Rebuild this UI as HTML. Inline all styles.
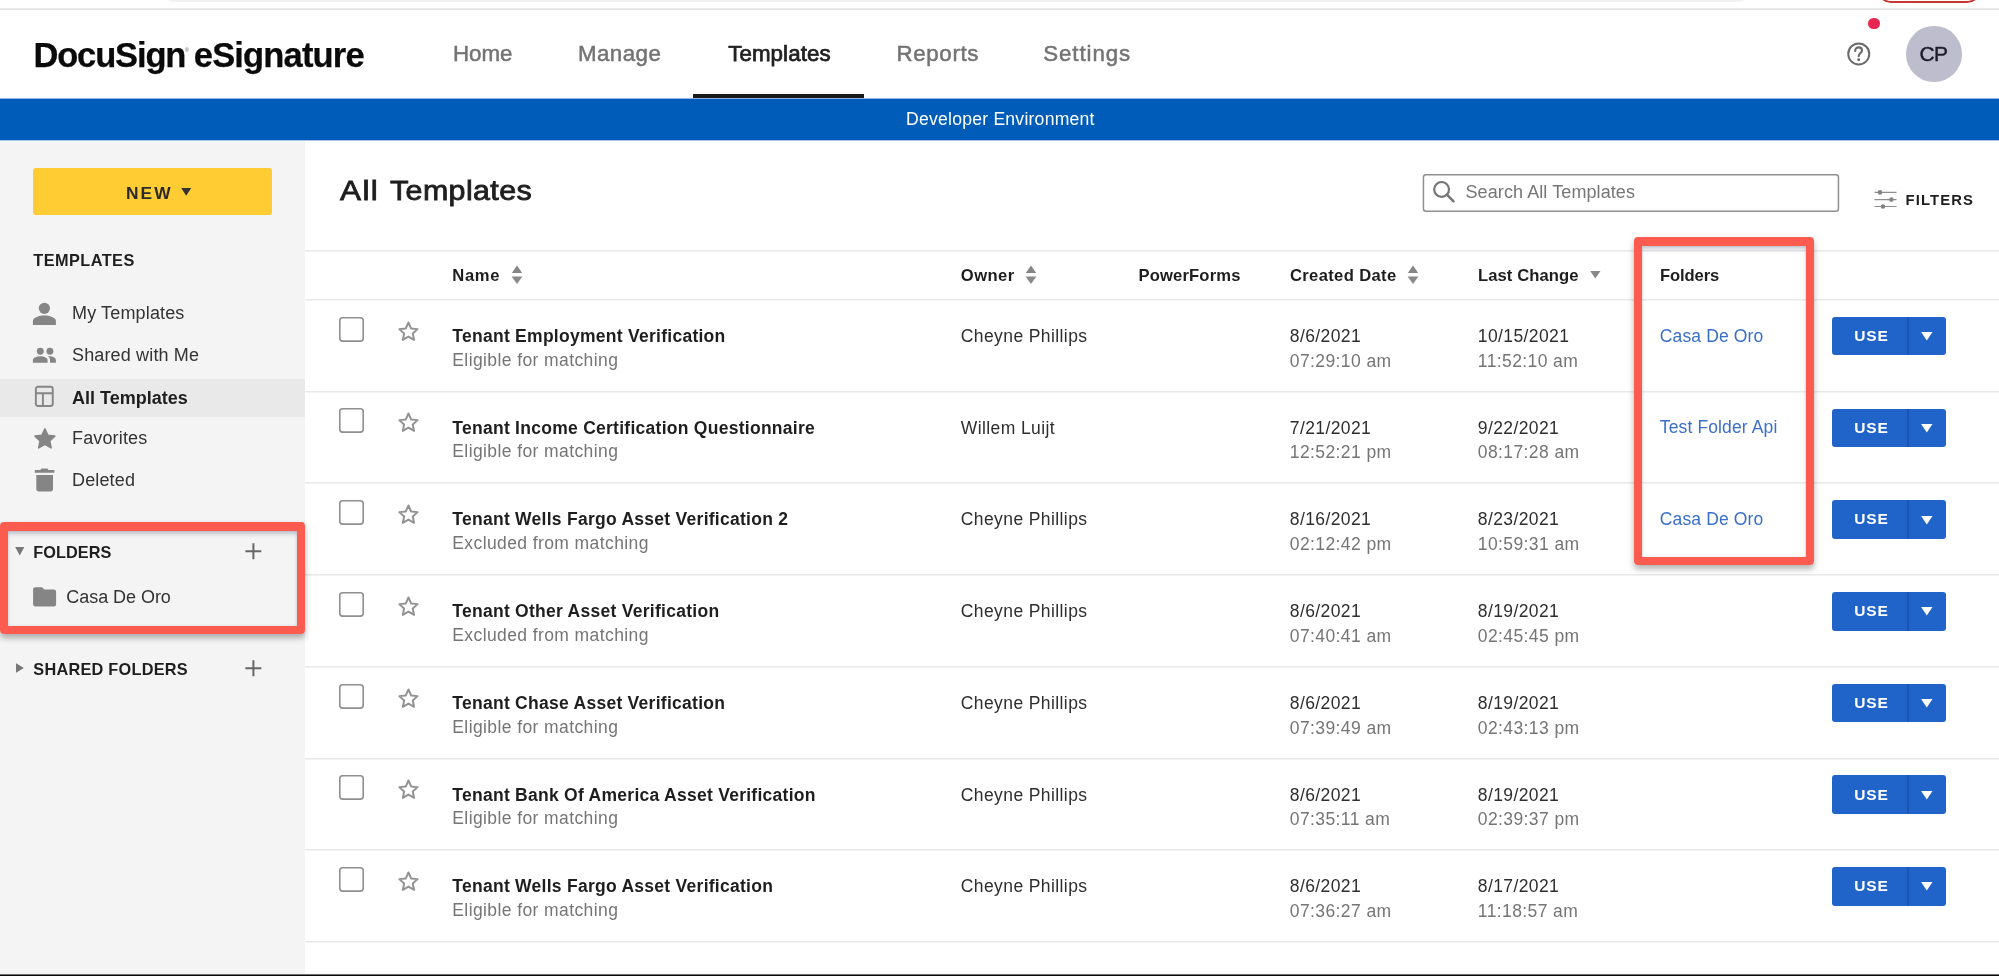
<!DOCTYPE html>
<html lang="en">
<head>
<meta charset="utf-8">
<title>DocuSign eSignature</title>
<style>
*{box-sizing:border-box;margin:0;padding:0}
html,body{width:1999px;height:976px;overflow:hidden;background:#fff}
body{font-family:"Liberation Sans",sans-serif;color:#1e1e1e;position:relative;will-change:transform}
.abs{position:absolute}
.t{position:absolute;white-space:nowrap;line-height:1}
svg{position:absolute;overflow:visible}
#stripline{left:0;top:8px;width:1999px;height:2px;background:linear-gradient(#ebebeb 0,#ebebeb 1px,#e3e3e3 1px,#e3e3e3 2px)}
#addr{left:160px;top:-30px;width:1593px;height:32px;border-radius:16px;background:#f1f1f1}
#redbtn{left:1876.5px;top:-30px;width:104px;height:32.6px;border:2px solid #c9362f;border-radius:14px;background:#fff}
#logo,#logo2{top:38.1px;font-size:34.5px;font-weight:bold;color:#0a0a0a;-webkit-text-stroke:.25px #0a0a0a}
#logo{left:33.4px;letter-spacing:-1.14px}
#logo2{left:193.8px;letter-spacing:-.83px}
#reg{left:185px;top:48.3px;font-size:5px;color:#555}
.nav{font-size:22.3px;color:#737373;top:43.0px;-webkit-text-stroke:.5px #737373}
.nav.on{color:#222;-webkit-text-stroke:.75px #222}
#navline{left:693px;top:94px;width:171px;height:5px;background:#1a1a1a}
#bluebar{left:0;top:98px;width:1999px;height:43px;background:linear-gradient(#8fb4e3 0,#8fb4e3 1px,#005cb9 1px,#005cb9 42px,#a9c6ea 42px,#a9c6ea 43px)}
#devenv{left:906px;top:110.6px;color:#fff;font-size:17.6px;letter-spacing:.23px}
#avatar{left:1906px;top:26px;width:55.5px;height:55.5px;border-radius:50%;background:#bebdcd}
#avtxt{left:1919.4px;top:42.5px;font-size:21px;color:#1e1e2a;-webkit-text-stroke:.45px #1e1e2a;letter-spacing:-.6px}
#reddot{left:1868.3px;top:17.8px;width:11.4px;height:11.4px;border-radius:50%;background:#e8264f}
#side{left:0;top:140px;width:305px;height:836px;background:#f4f4f4}
#newbtn{left:33px;top:168px;width:239px;height:47px;background:#ffcc33;border-radius:3px}
#newtxt{left:126px;top:184.9px;font-size:16.2px;font-weight:bold;letter-spacing:1.9px;color:#2a2a2a;transform-origin:0 50%;transform:scaleX(1.07)}
.sh{font-size:16.3px;font-weight:bold;color:#1e1e1e;left:33.3px}
.si{font-size:18px;color:#333;left:72px;letter-spacing:.15px}
#selrow{left:0;top:379px;width:305px;height:38px;background:#e9e9e9}
#title,#title2{top:177.0px;font-size:27.4px;color:#1e1e1e;-webkit-text-stroke:.8px #1e1e1e;transform-origin:0 50%}
#title{left:340px;letter-spacing:1.2px;transform:scaleX(1.15)}
#title2{left:390.4px;letter-spacing:.35px;transform:scaleX(1.11)}
#search{left:1422px;top:174px;width:416.5px;height:38px;border:2px solid #a8a8a8;border-radius:3.5px;background:#fff}
#searchtxt{left:1465.5px;top:183.0px;font-size:18px;color:#767676;letter-spacing:.09px}
#filters{left:1905.5px;top:193.1px;font-size:14.8px;font-weight:bold;letter-spacing:1.13px;color:#1e1e1e}
.hl{left:305px;width:1694px;height:2px;background:linear-gradient(#e9e9e9 0,#e9e9e9 1px,#f3f3f3 1px,#f3f3f3 2px)}
.th{font-size:16.6px;font-weight:bold;color:#1e1e1e;top:267.5px}
.nm{font-size:17.5px;font-weight:bold;color:#1e1e1e;left:452.3px;letter-spacing:.27px}
.sub{font-size:17.5px;color:#757575;left:452.3px;letter-spacing:.4px}
.c1{font-size:17.5px;color:#2e2e2e;letter-spacing:.4px}
.c2{font-size:17.5px;color:#757575;letter-spacing:.4px}
.lnk{font-size:17.5px;color:#3a6fc9;left:1659.8px;letter-spacing:.13px}
.cb{left:339px;width:25px;height:25px;border:2px solid #9b9b9b;border-radius:3px;background:#fff}
.use{left:1832px;width:114px;height:38.5px;background:#2063c9;border-radius:3px}
.usediv{left:1907px;width:1.5px;height:38.5px;background:#1a55b3}
.usetxt{left:1854.2px;font-size:15.5px;font-weight:bold;letter-spacing:.9px;color:#fff}
.redbox{border:8px solid #fc5b4f;border-top-width:9px;border-radius:4px;box-shadow:0 4px 6px rgba(0,0,0,.30), inset 0 4px 4px -1px rgba(80,85,120,.30), inset 0 0 3px rgba(80,85,120,.18)}
</style>
</head>
<body>
<div class="abs" id="addr"></div>
<div class="abs" id="redbtn"></div>
<div class="abs" id="stripline"></div>
<div class="t" id="logo">DocuSign</div>
<div class="t" id="reg">&reg;</div>
<div class="t" id="logo2">eSignature</div>
<div class="t nav" style="left:453.0px;letter-spacing:-0.05px">Home</div>
<div class="t nav" style="left:578.0px;letter-spacing:0.45px">Manage</div>
<div class="t nav on" style="left:728.2px;letter-spacing:0.1px">Templates</div>
<div class="t nav" style="left:896.5px;letter-spacing:0.65px">Reports</div>
<div class="t nav" style="left:1043.3px;letter-spacing:0.9px">Settings</div>
<div class="abs" id="navline"></div>
<div class="abs" id="reddot"></div>
<div class="abs" id="avatar"></div>
<div class="t" id="avtxt">CP</div>
<div class="abs" id="side"></div>
<div class="abs" id="bluebar"></div>
<div class="t" id="devenv">Developer Environment</div>
<div class="abs" id="newbtn"></div>
<div class="t" id="newtxt">NEW</div>
<div class="t sh" style="top:251.6px;letter-spacing:.45px">TEMPLATES</div>
<div class="abs" id="selrow"></div>
<div class="t si" style="top:304.0px;">My Templates</div>
<div class="t si" style="top:345.7px;">Shared with Me</div>
<div class="t si" style="top:388.9px;font-weight:bold;color:#1e1e1e;letter-spacing:0">All Templates</div>
<div class="t si" style="top:429.4px;">Favorites</div>
<div class="t si" style="top:470.7px;">Deleted</div>
<div class="t sh" style="top:543.9px;letter-spacing:.05px">FOLDERS</div>
<div class="t si" style="left:66.3px;top:587.6px;letter-spacing:-.05px">Casa De Oro</div>
<div class="t sh" style="top:661.1px;letter-spacing:.25px">SHARED FOLDERS</div>
<div class="t" id="title">All</div>
<div class="t" id="title2">Templates</div>
<svg style="left:1422px;top:174px" width="418" height="39" viewBox="0 0 418 39"><rect x="1.45" y="0.85" width="415" height="36.3" rx="2.5" fill="#fff" stroke="#8f8f8f" stroke-width="1.5"/></svg>
<div class="t" id="searchtxt">Search All Templates</div>
<div class="t" id="filters">FILTERS</div>
<div class="abs hl" style="top:250px"></div>
<div class="abs hl" style="top:299px"></div>
<div class="t th" style="left:452.3px;letter-spacing:0.63px">Name</div>
<div class="t th" style="left:960.8px;letter-spacing:0.44px">Owner</div>
<div class="t th" style="left:1138.6px;letter-spacing:0.14px">PowerForms</div>
<div class="t th" style="left:1289.9px;letter-spacing:0.36px">Created Date</div>
<div class="t th" style="left:1477.9px;letter-spacing:0.11px">Last Change</div>
<div class="t th" style="left:1659.9px;letter-spacing:-0.08px">Folders</div>
<svg style="left:511px;top:265px" width="12" height="20" viewBox="0 0 12 20"><path d="M6 0.6 L11.2 8.1 H0.8 Z" fill="#858585"/><path d="M0.6 11.4 H11.4 L6 19 Z" fill="#8a8a8a"/></svg><svg style="left:1024.8px;top:265px" width="12" height="20" viewBox="0 0 12 20"><path d="M6 0.6 L11.2 8.1 H0.8 Z" fill="#858585"/><path d="M0.6 11.4 H11.4 L6 19 Z" fill="#8a8a8a"/></svg><svg style="left:1406.7px;top:265px" width="12" height="20" viewBox="0 0 12 20"><path d="M6 0.6 L11.2 8.1 H0.8 Z" fill="#858585"/><path d="M0.6 11.4 H11.4 L6 19 Z" fill="#8a8a8a"/></svg><svg style="left:1589.7px;top:271px" width="11" height="8" viewBox="0 0 11 8"><path d="M0.2 0 H10.5 L5.35 7.5 Z" fill="#888"/></svg>
<!-- row 1 -->
<svg style="left:338.8px;top:316.7px" width="25" height="25" viewBox="0 0 25 25"><rect x="0.8" y="0.8" width="23.4" height="23.3" rx="2.8" fill="#fff" stroke="#8f8f8f" stroke-width="1.6"/></svg>
<svg style="left:396px;top:320.6px" width="25" height="23" viewBox="0 0 25 23"><path d="M12.45 1.50 L15.10 7.45 L21.58 8.13 L16.74 12.49 L18.09 18.87 L12.45 15.61 L6.81 18.87 L8.16 12.49 L3.32 8.13 L9.80 7.45 Z" fill="none" stroke="#939393" stroke-width="2" stroke-linejoin="round"/></svg>
<div class="t nm" style="top:327.9px">Tenant Employment Verification</div>
<div class="t sub" style="top:351.6px">Eligible for matching</div>
<div class="t c1" style="left:960.8px;top:327.9px">Cheyne Phillips</div>
<div class="t c1" style="left:1289.8px;top:327.9px">8/6/2021</div>
<div class="t c2" style="left:1289.8px;top:352.7px">07:29:10 am</div>
<div class="t c1" style="left:1477.8px;top:327.9px">10/15/2021</div>
<div class="t c2" style="left:1477.8px;top:352.7px">11:52:10 am</div>
<div class="t lnk" style="top:327.7px">Casa De Oro</div>
<div class="abs use" style="top:316.8px"></div>
<div class="abs usediv" style="top:316.8px"></div>
<div class="t usetxt" style="top:327.9px">USE</div>
<svg style="left:1921px;top:332.1px" width="12" height="9" viewBox="0 0 12 9"><path d="M0.1 0 H11.5 L5.8 8.6 Z" fill="#fff"/></svg>
<div class="abs hl" style="top:391px"></div>
<!-- row 2 -->
<svg style="left:338.8px;top:408.4px" width="25" height="25" viewBox="0 0 25 25"><rect x="0.8" y="0.8" width="23.4" height="23.3" rx="2.8" fill="#fff" stroke="#8f8f8f" stroke-width="1.6"/></svg>
<svg style="left:396px;top:412.3px" width="25" height="23" viewBox="0 0 25 23"><path d="M12.45 1.50 L15.10 7.45 L21.58 8.13 L16.74 12.49 L18.09 18.87 L12.45 15.61 L6.81 18.87 L8.16 12.49 L3.32 8.13 L9.80 7.45 Z" fill="none" stroke="#939393" stroke-width="2" stroke-linejoin="round"/></svg>
<div class="t nm" style="top:419.6px">Tenant Income Certification Questionnaire</div>
<div class="t sub" style="top:443.3px">Eligible for matching</div>
<div class="t c1" style="left:960.8px;top:419.6px">Willem Luijt</div>
<div class="t c1" style="left:1289.8px;top:419.6px">7/21/2021</div>
<div class="t c2" style="left:1289.8px;top:444.4px">12:52:21 pm</div>
<div class="t c1" style="left:1477.8px;top:419.6px">9/22/2021</div>
<div class="t c2" style="left:1477.8px;top:444.4px">08:17:28 am</div>
<div class="t lnk" style="top:419.4px">Test Folder Api</div>
<div class="abs use" style="top:408.5px"></div>
<div class="abs usediv" style="top:408.5px"></div>
<div class="t usetxt" style="top:419.6px">USE</div>
<svg style="left:1921px;top:423.8px" width="12" height="9" viewBox="0 0 12 9"><path d="M0.1 0 H11.5 L5.8 8.6 Z" fill="#fff"/></svg>
<div class="abs hl" style="top:482px"></div>
<!-- row 3 -->
<svg style="left:338.8px;top:500.1px" width="25" height="25" viewBox="0 0 25 25"><rect x="0.8" y="0.8" width="23.4" height="23.3" rx="2.8" fill="#fff" stroke="#8f8f8f" stroke-width="1.6"/></svg>
<svg style="left:396px;top:504.0px" width="25" height="23" viewBox="0 0 25 23"><path d="M12.45 1.50 L15.10 7.45 L21.58 8.13 L16.74 12.49 L18.09 18.87 L12.45 15.61 L6.81 18.87 L8.16 12.49 L3.32 8.13 L9.80 7.45 Z" fill="none" stroke="#939393" stroke-width="2" stroke-linejoin="round"/></svg>
<div class="t nm" style="top:511.3px">Tenant Wells Fargo Asset Verification 2</div>
<div class="t sub" style="top:535.0px">Excluded from matching</div>
<div class="t c1" style="left:960.8px;top:511.3px">Cheyne Phillips</div>
<div class="t c1" style="left:1289.8px;top:511.3px">8/16/2021</div>
<div class="t c2" style="left:1289.8px;top:536.1px">02:12:42 pm</div>
<div class="t c1" style="left:1477.8px;top:511.3px">8/23/2021</div>
<div class="t c2" style="left:1477.8px;top:536.1px">10:59:31 am</div>
<div class="t lnk" style="top:511.1px">Casa De Oro</div>
<div class="abs use" style="top:500.2px"></div>
<div class="abs usediv" style="top:500.2px"></div>
<div class="t usetxt" style="top:511.3px">USE</div>
<svg style="left:1921px;top:515.5px" width="12" height="9" viewBox="0 0 12 9"><path d="M0.1 0 H11.5 L5.8 8.6 Z" fill="#fff"/></svg>
<div class="abs hl" style="top:574px"></div>
<!-- row 4 -->
<svg style="left:338.8px;top:591.9px" width="25" height="25" viewBox="0 0 25 25"><rect x="0.8" y="0.8" width="23.4" height="23.3" rx="2.8" fill="#fff" stroke="#8f8f8f" stroke-width="1.6"/></svg>
<svg style="left:396px;top:595.8px" width="25" height="23" viewBox="0 0 25 23"><path d="M12.45 1.50 L15.10 7.45 L21.58 8.13 L16.74 12.49 L18.09 18.87 L12.45 15.61 L6.81 18.87 L8.16 12.49 L3.32 8.13 L9.80 7.45 Z" fill="none" stroke="#939393" stroke-width="2" stroke-linejoin="round"/></svg>
<div class="t nm" style="top:603.1px">Tenant Other Asset Verification</div>
<div class="t sub" style="top:626.8px">Excluded from matching</div>
<div class="t c1" style="left:960.8px;top:603.1px">Cheyne Phillips</div>
<div class="t c1" style="left:1289.8px;top:603.1px">8/6/2021</div>
<div class="t c2" style="left:1289.8px;top:627.9px">07:40:41 am</div>
<div class="t c1" style="left:1477.8px;top:603.1px">8/19/2021</div>
<div class="t c2" style="left:1477.8px;top:627.9px">02:45:45 pm</div>
<div class="abs use" style="top:592.0px"></div>
<div class="abs usediv" style="top:592.0px"></div>
<div class="t usetxt" style="top:603.1px">USE</div>
<svg style="left:1921px;top:607.3px" width="12" height="9" viewBox="0 0 12 9"><path d="M0.1 0 H11.5 L5.8 8.6 Z" fill="#fff"/></svg>
<div class="abs hl" style="top:666px"></div>
<!-- row 5 -->
<svg style="left:338.8px;top:683.6px" width="25" height="25" viewBox="0 0 25 25"><rect x="0.8" y="0.8" width="23.4" height="23.3" rx="2.8" fill="#fff" stroke="#8f8f8f" stroke-width="1.6"/></svg>
<svg style="left:396px;top:687.5px" width="25" height="23" viewBox="0 0 25 23"><path d="M12.45 1.50 L15.10 7.45 L21.58 8.13 L16.74 12.49 L18.09 18.87 L12.45 15.61 L6.81 18.87 L8.16 12.49 L3.32 8.13 L9.80 7.45 Z" fill="none" stroke="#939393" stroke-width="2" stroke-linejoin="round"/></svg>
<div class="t nm" style="top:694.8px">Tenant Chase Asset Verification</div>
<div class="t sub" style="top:718.5px">Eligible for matching</div>
<div class="t c1" style="left:960.8px;top:694.8px">Cheyne Phillips</div>
<div class="t c1" style="left:1289.8px;top:694.8px">8/6/2021</div>
<div class="t c2" style="left:1289.8px;top:719.6px">07:39:49 am</div>
<div class="t c1" style="left:1477.8px;top:694.8px">8/19/2021</div>
<div class="t c2" style="left:1477.8px;top:719.6px">02:43:13 pm</div>
<div class="abs use" style="top:683.7px"></div>
<div class="abs usediv" style="top:683.7px"></div>
<div class="t usetxt" style="top:694.8px">USE</div>
<svg style="left:1921px;top:699.0px" width="12" height="9" viewBox="0 0 12 9"><path d="M0.1 0 H11.5 L5.8 8.6 Z" fill="#fff"/></svg>
<div class="abs hl" style="top:758px"></div>
<!-- row 6 -->
<svg style="left:338.8px;top:775.3px" width="25" height="25" viewBox="0 0 25 25"><rect x="0.8" y="0.8" width="23.4" height="23.3" rx="2.8" fill="#fff" stroke="#8f8f8f" stroke-width="1.6"/></svg>
<svg style="left:396px;top:779.2px" width="25" height="23" viewBox="0 0 25 23"><path d="M12.45 1.50 L15.10 7.45 L21.58 8.13 L16.74 12.49 L18.09 18.87 L12.45 15.61 L6.81 18.87 L8.16 12.49 L3.32 8.13 L9.80 7.45 Z" fill="none" stroke="#939393" stroke-width="2" stroke-linejoin="round"/></svg>
<div class="t nm" style="top:786.5px">Tenant Bank Of America Asset Verification</div>
<div class="t sub" style="top:810.2px">Eligible for matching</div>
<div class="t c1" style="left:960.8px;top:786.5px">Cheyne Phillips</div>
<div class="t c1" style="left:1289.8px;top:786.5px">8/6/2021</div>
<div class="t c2" style="left:1289.8px;top:811.3px">07:35:11 am</div>
<div class="t c1" style="left:1477.8px;top:786.5px">8/19/2021</div>
<div class="t c2" style="left:1477.8px;top:811.3px">02:39:37 pm</div>
<div class="abs use" style="top:775.4px"></div>
<div class="abs usediv" style="top:775.4px"></div>
<div class="t usetxt" style="top:786.5px">USE</div>
<svg style="left:1921px;top:790.7px" width="12" height="9" viewBox="0 0 12 9"><path d="M0.1 0 H11.5 L5.8 8.6 Z" fill="#fff"/></svg>
<div class="abs hl" style="top:849px"></div>
<!-- row 7 -->
<svg style="left:338.8px;top:867.0px" width="25" height="25" viewBox="0 0 25 25"><rect x="0.8" y="0.8" width="23.4" height="23.3" rx="2.8" fill="#fff" stroke="#8f8f8f" stroke-width="1.6"/></svg>
<svg style="left:396px;top:870.9px" width="25" height="23" viewBox="0 0 25 23"><path d="M12.45 1.50 L15.10 7.45 L21.58 8.13 L16.74 12.49 L18.09 18.87 L12.45 15.61 L6.81 18.87 L8.16 12.49 L3.32 8.13 L9.80 7.45 Z" fill="none" stroke="#939393" stroke-width="2" stroke-linejoin="round"/></svg>
<div class="t nm" style="top:878.2px">Tenant Wells Fargo Asset Verification</div>
<div class="t sub" style="top:901.9px">Eligible for matching</div>
<div class="t c1" style="left:960.8px;top:878.2px">Cheyne Phillips</div>
<div class="t c1" style="left:1289.8px;top:878.2px">8/6/2021</div>
<div class="t c2" style="left:1289.8px;top:903.0px">07:36:27 am</div>
<div class="t c1" style="left:1477.8px;top:878.2px">8/17/2021</div>
<div class="t c2" style="left:1477.8px;top:903.0px">11:18:57 am</div>
<div class="abs use" style="top:867.1px"></div>
<div class="abs usediv" style="top:867.1px"></div>
<div class="t usetxt" style="top:878.2px">USE</div>
<svg style="left:1921px;top:882.4px" width="12" height="9" viewBox="0 0 12 9"><path d="M0.1 0 H11.5 L5.8 8.6 Z" fill="#fff"/></svg>
<div class="abs hl" style="top:941px"></div>

<!-- help icon -->
<svg style="left:1846px;top:41px" width="26" height="26" viewBox="0 0 26 26"><circle cx="12.75" cy="12.95" r="10.5" fill="none" stroke="#6a6a6a" stroke-width="2"/><path d="M9.2 9.9 C9.2 7.6 10.7 6.4 12.7 6.4 C14.7 6.4 16 7.7 16 9.4 C16 12 12.7 12.2 12.7 15.2" fill="none" stroke="#6a6a6a" stroke-width="2.1" stroke-linecap="round"/><circle cx="12.65" cy="18.8" r="1.45" fill="#6a6a6a"/></svg>
<!-- new triangle -->
<svg style="left:181px;top:187.5px" width="11" height="8" viewBox="0 0 11 8"><path d="M0.2 0 H10.2 L5.2 7.8 Z" fill="#333"/></svg>
<!-- person -->
<svg style="left:32px;top:302px" width="25" height="24" viewBox="0 0 25 24"><circle cx="12.4" cy="6.3" r="5.6" fill="#858585"/><path d="M0.9 22.9 V19 C0.9 15.5 7.5 13.6 12.4 13.6 C17.3 13.6 23.9 15.5 23.9 19 V22.9 Z" fill="#858585"/></svg>
<!-- people -->
<svg style="left:32px;top:346.5px" width="25" height="17" viewBox="0 0 25 17"><circle cx="8.3" cy="4.2" r="3.45" fill="#858585"/><circle cx="17.9" cy="4.2" r="3.45" fill="#858585"/><path d="M0.9 15.7 V13 C0.9 10.4 5.5 9.2 8.4 9.2 C11.3 9.2 15.6 10.4 15.6 13 V15.7 Z" fill="#858585"/><path d="M17.6 9.2 C17 9.2 16.4 9.25 15.8 9.35 C17.3 10.2 18 11.5 18 13 V15.7 H23.9 V13 C23.9 10.4 20.5 9.2 17.6 9.2 Z" fill="#858585"/></svg>
<!-- template icon -->
<svg style="left:34px;top:385.1px" width="22" height="24" viewBox="0 0 22 24"><rect x="1.85" y="1.75" width="16.9" height="19.3" rx="2.2" fill="none" stroke="#858585" stroke-width="1.9"/><path d="M1.85 8.3 H18.75 M8.9 8.3 V21.05" fill="none" stroke="#858585" stroke-width="1.9"/></svg>
<!-- star filled -->
<svg style="left:32.5px;top:426.9px" width="24" height="23" viewBox="0 0 24 23"><path d="M11.9 1.9 L14.9 8.3 L21.8 9.1 L16.7 13.9 L18.1 20.8 L11.9 17.3 L5.7 20.8 L7.1 13.9 L2 9.1 L8.9 8.3 Z" fill="#858585" stroke="#858585" stroke-width="1.6" stroke-linejoin="round"/></svg>
<!-- trash -->
<svg style="left:34px;top:468px" width="22" height="24" viewBox="0 0 22 24"><path d="M0.8 2 H6.3 L7.4 0.6 H13.4 L14.5 2 H20.4 V4.7 H0.8 Z" fill="#858585"/><path d="M2.3 6.9 H19 V21 C19 22.4 18 23.4 16.6 23.4 H4.7 C3.3 23.4 2.3 22.4 2.3 21 Z" fill="#858585"/></svg>
<!-- folders down triangle -->
<svg style="left:15px;top:547.3px" width="10" height="9" viewBox="0 0 10 9"><path d="M0.2 0 H9.3 L4.75 8.4 Z" fill="#777"/></svg>
<!-- plus 1 -->
<svg style="left:244.5px;top:543.3px" width="17" height="17" viewBox="0 0 17 17"><path d="M8.4 0.2 V16.3 M0.4 8.2 H16.3" stroke="#666" stroke-width="2" fill="none"/></svg>
<!-- folder icon -->
<svg style="left:33px;top:587.3px" width="24" height="20" viewBox="0 0 24 20"><path d="M2.3 0.2 H9 L11.4 2.6 H20.9 C22.2 2.6 23.1 3.5 23.1 4.8 V17.2 C23.1 18.5 22.2 19.4 20.9 19.4 H2.3 C1 19.4 0.1 18.5 0.1 17.2 V2.4 C0.1 1.1 1 0.2 2.3 0.2 Z" fill="#858585"/></svg>
<!-- shared right triangle -->
<svg style="left:15.5px;top:663px" width="9" height="10" viewBox="0 0 9 10"><path d="M0 0.2 L7.9 5 L0 9.8 Z" fill="#777"/></svg>
<!-- plus 2 -->
<svg style="left:244.5px;top:660.1px" width="17" height="17" viewBox="0 0 17 17"><path d="M8.4 0.2 V16.3 M0.4 8.2 H16.3" stroke="#666" stroke-width="2" fill="none"/></svg>
<!-- magnifier -->
<svg style="left:1432.1px;top:182px" width="24" height="22" viewBox="0 0 24 22"><circle cx="9.6" cy="7.4" r="7.4" fill="none" stroke="#767676" stroke-width="2.2"/><path d="M14.9 12.7 L21.5 19.3" stroke="#767676" stroke-width="2.5" stroke-linecap="round"/></svg>
<!-- filter icon -->
<svg style="left:1873.5px;top:189px" width="23" height="20" viewBox="0 0 23 20"><path d="M0.5 3.4 H22.5 M0.5 10.6 H22.5 M0.5 17.5 H22.5" stroke="#8e8e8e" stroke-width="1.2"/><circle cx="6" cy="3.4" r="2.3" fill="#858585"/><circle cx="17.4" cy="10.6" r="2.3" fill="#858585"/><circle cx="9" cy="17.5" r="2.3" fill="#858585"/></svg>

<div class="abs redbox" style="left:0px;top:522px;width:305.3px;height:112.4px"></div>
<div class="abs redbox" style="left:1634px;top:237px;width:180.2px;height:328px"></div>
<div class="abs" style="left:0;top:974px;width:1999px;height:2px;background:linear-gradient(#6e6e6e 0,#6e6e6e 1px,#0a0a0a 1px,#0a0a0a 2px)"></div>
</body>
</html>
